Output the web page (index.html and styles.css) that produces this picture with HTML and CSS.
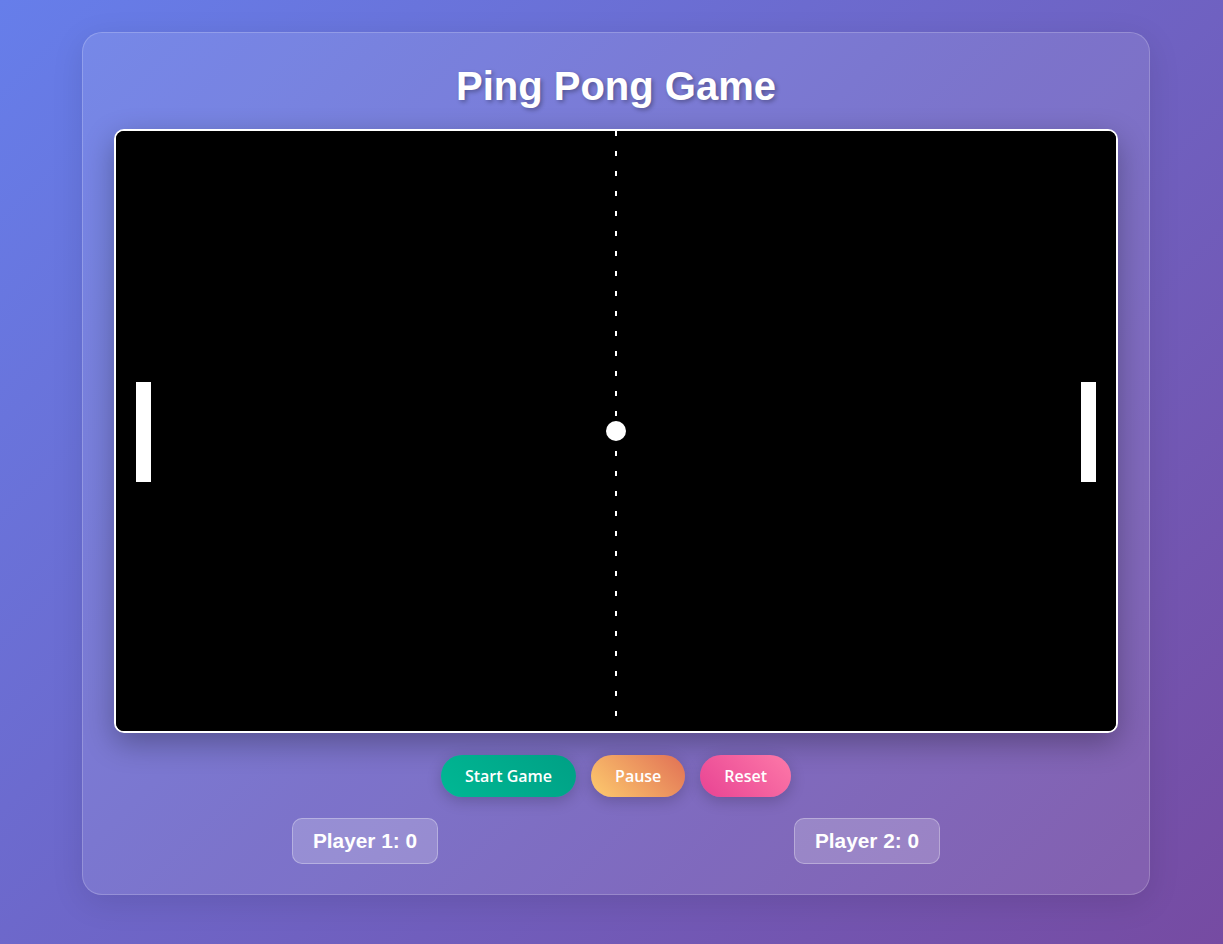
FILE: index.html
```html
<!DOCTYPE html>
<html lang="en">
<head>
<meta charset="utf-8">
<title>Ping Pong Game</title>
<link rel="stylesheet" href="styles.css">
</head>
<body>
<div class="game-container">
  <h1 class="title">Ping Pong Game</h1>
  <div class="board">
    <svg class="court" width="1000" height="600" viewBox="0 0 1000 600">
      <rect x="0" y="0" width="1000" height="600" fill="#000"/>
      <line x1="500" y1="0" x2="500" y2="600" stroke="#fff" stroke-width="2" stroke-dasharray="5 15"/>
      <rect x="20" y="251" width="15" height="100" fill="#fff"/>
      <rect x="965" y="251" width="15" height="100" fill="#fff"/>
      <circle cx="500" cy="300" r="10" fill="#fff"/>
    </svg>
  </div>
  <div class="controls">
    <button class="btn btn-start">Start Game</button>
    <button class="btn btn-pause">Pause</button>
    <button class="btn btn-reset">Reset</button>
  </div>
  <div class="scores">
    <div class="score">Player 1: 0</div>
    <div class="score">Player 2: 0</div>
  </div>
</div>
</body>
</html>
```
FILE: styles.css
```css
html, body {
  margin: 0;
  height: 100%;
}
body {
  background: linear-gradient(135deg, #667eea 0%, #764ba2 100%);
  font-family: "Liberation Sans", Arial, sans-serif;
  display: flex;
  justify-content: center;
  align-items: flex-start;
  padding: 32px 0 0 9px;
  box-sizing: border-box;
}
.game-container {
  width: 1068px;
  box-sizing: border-box;
  padding: 30px 31px;
  background: rgba(255, 255, 255, 0.1);
  border: 1px solid rgba(255, 255, 255, 0.2);
  border-radius: 20px;
  box-shadow: 0 8px 32px rgba(0, 0, 0, 0.1);
  display: flex;
  flex-direction: column;
  align-items: stretch;
}
.title {
  margin: 0 0 20px;
  font-size: 40px;
  font-weight: 700;
  line-height: 46px;
  color: #fff;
  text-align: center;
  text-shadow: 2px 2px 4px rgba(0, 0, 0, 0.3);
}
.board {
  border: 2px solid #fff;
  border-radius: 10px;
  overflow: hidden;
  background: #000;
  height: 600px;
  box-shadow: 0 10px 30px rgba(0, 0, 0, 0.3);
}
.court {
  display: block;
}
.controls {
  margin-top: 22px;
  display: flex;
  justify-content: center;
  gap: 15px;
}
.btn {
  border: none;
  border-radius: 25px;
  padding: 12px 24px;
  font-family: "Open Sans", "Noto Sans", sans-serif;
  font-size: 16px;
  font-weight: 600;
  line-height: 18px;
  color: #fff;
  cursor: pointer;
  box-shadow: 0 4px 15px rgba(0, 0, 0, 0.2);
}
.btn-start {
  background: linear-gradient(45deg, #00b894, #00a085);
}
.btn-pause {
  background: linear-gradient(45deg, #fdcb6e, #e17055);
}
.btn-reset {
  background: linear-gradient(45deg, #e84393, #fd79a8);
}
.scores {
  margin-top: 21px;
  display: flex;
  justify-content: space-around;
}
.score {
  padding: 10px 20px;
  font-size: 20.8px;
  font-weight: 700;
  line-height: 24px;
  color: #fff;
  background: rgba(255, 255, 255, 0.2);
  border: 1px solid rgba(255, 255, 255, 0.3);
  border-radius: 10px;
}
```
